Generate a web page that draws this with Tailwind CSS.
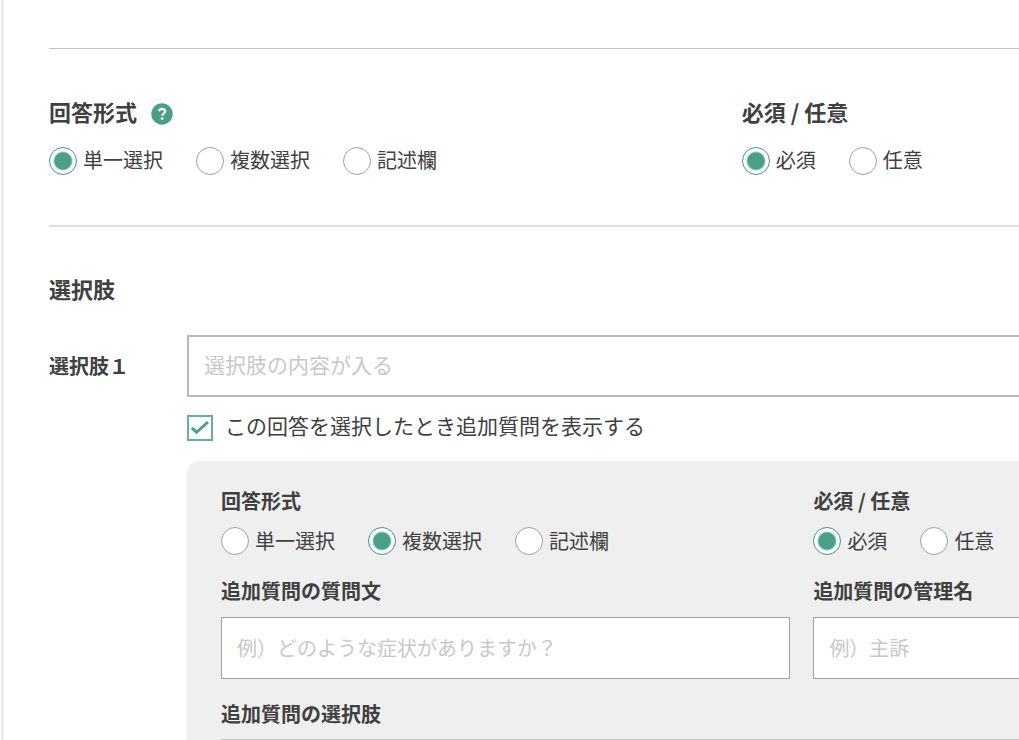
<!DOCTYPE html>
<html lang="ja">
<head>
<meta charset="utf-8">
<meta name="viewport" content="width=device-width, initial-scale=1">
<title>質問設定</title>
<script src="https://cdn.jsdelivr.net/npm/@tailwindcss/browser@4"></script>
</head>
<body class="h-screen overflow-hidden bg-white pl-px font-['Noto_Sans_CJK_JP',sans-serif] text-[#404040]">
<main class="h-full overflow-hidden border-l-[3px] border-[#ececec] pl-[45px]">
  <section class="mt-12 inline-block w-full border-t border-[#bfc7c5] pt-12">
    <div class="grid grid-cols-[5fr_2fr]">
      <fieldset>
        <legend class="flex items-end gap-[14px] text-[22px] leading-7 font-bold">回答形式
          <button type="button" aria-label="ヘルプ" class="block size-[22px]">
            <svg viewBox="0 0 22 22" class="size-full"><circle cx="11" cy="11" r="10.7" fill="#4b9f86"/><path d="M7.900 8.200C8.500 6.400 9.600 5.800 11 5.800c1.800 0 3.100 1 3.100 2.600 0 2.200-2.900 2.300-2.900 4.400" fill="none" stroke="#fff" stroke-width="2.200"/><circle cx="11.100" cy="15.600" r="1.400" fill="#fff"/></svg>
          </button>
        </legend>
        <div class="mt-[22px] flex gap-[33px] text-[20px] leading-[26px]">
          <label class="flex gap-1.5"><input type="radio" name="format" checked class="size-7 appearance-none rounded-full border border-[#a0a0a0] bg-white checked:border-[#3f997e] checked:bg-[radial-gradient(circle,#4b9f86_8px,#fff_10px)]">単一選択</label>
          <label class="flex gap-1.5"><input type="radio" name="format" class="size-7 appearance-none rounded-full border border-[#a0a0a0] bg-white checked:border-[#3f997e] checked:bg-[radial-gradient(circle,#4b9f86_8px,#fff_10px)]">複数選択</label>
          <label class="flex gap-1.5"><input type="radio" name="format" class="size-7 appearance-none rounded-full border border-[#a0a0a0] bg-white checked:border-[#3f997e] checked:bg-[radial-gradient(circle,#4b9f86_8px,#fff_10px)]">記述欄</label>
        </div>
      </fieldset>
      <fieldset>
        <legend class="text-[22px] leading-7 font-bold">必須 / 任意</legend>
        <div class="mt-[22px] flex gap-[33px] text-[20px] leading-[26px]">
          <label class="flex gap-1.5"><input type="radio" name="need" checked class="size-7 appearance-none rounded-full border border-[#a0a0a0] bg-white checked:border-[#3f997e] checked:bg-[radial-gradient(circle,#4b9f86_8px,#fff_10px)]">必須</label>
          <label class="flex gap-1.5"><input type="radio" name="need" class="size-7 appearance-none rounded-full border border-[#a0a0a0] bg-white checked:border-[#3f997e] checked:bg-[radial-gradient(circle,#4b9f86_8px,#fff_10px)]">任意</label>
        </div>
      </fieldset>
    </div>
    <div class="mt-[50px] border-t-2 border-[#d9dfdd] pt-12">
      <h2 class="text-[22px] leading-[26px] font-bold">選択肢</h2>
      <div class="mt-[34px] flex">
        <label for="choice1" class="w-[138px] shrink-0 text-[20px] leading-[62px] font-bold">選択肢１</label>
        <div class="min-w-0 flex-1">
          <input id="choice1" type="text" placeholder="選択肢の内容が入る" class="block h-[62px] w-full border-2 border-r-0 border-[#b8b8b8] bg-white px-[15px] pb-1 text-[21px] placeholder:text-[#c8c8c8]">
          <label class="mt-[18px] flex items-start gap-3 text-[21px] leading-5">
            <span class="grid size-[26px] shrink-0">
              <input type="checkbox" checked class="peer col-start-1 row-start-1 size-[26px] appearance-none border-2 border-[#66ae98] bg-white">
              <svg viewBox="0 0 26 26" class="pointer-events-none invisible col-start-1 row-start-1 peer-checked:visible"><path d="M4.800 12.800 9.500 17.300 21 7" fill="none" stroke="#4b9f86" stroke-width="3"/></svg>
            </span>
            この回答を選択したとき追加質問を表示する</label>
          <div class="mt-5 grid grid-cols-[36fr_13fr] gap-x-[23px] rounded-tl-xl bg-[#efefef] pt-[26px] pl-[34px]">
            <fieldset>
              <legend class="text-[20px] leading-7 font-bold">回答形式</legend>
              <div class="mt-3 flex gap-[33px] text-[20px] leading-7">
                <label class="flex gap-1.5"><input type="radio" name="subformat" class="size-7 appearance-none rounded-full border border-[#a0a0a0] bg-white checked:border-[#3f997e] checked:bg-[radial-gradient(circle,#4b9f86_8px,#fff_10px)]">単一選択</label>
                <label class="flex gap-1.5"><input type="radio" name="subformat" checked class="size-7 appearance-none rounded-full border border-[#a0a0a0] bg-white checked:border-[#3f997e] checked:bg-[radial-gradient(circle,#4b9f86_8px,#fff_10px)]">複数選択</label>
                <label class="flex gap-1.5"><input type="radio" name="subformat" class="size-7 appearance-none rounded-full border border-[#a0a0a0] bg-white checked:border-[#3f997e] checked:bg-[radial-gradient(circle,#4b9f86_8px,#fff_10px)]">記述欄</label>
              </div>
            </fieldset>
            <fieldset>
              <legend class="text-[20px] leading-7 font-bold">必須 / 任意</legend>
              <div class="mt-3 flex gap-[33px] text-[20px] leading-7">
                <label class="flex gap-1.5"><input type="radio" name="subneed" checked class="size-7 appearance-none rounded-full border border-[#a0a0a0] bg-white checked:border-[#3f997e] checked:bg-[radial-gradient(circle,#4b9f86_8px,#fff_10px)]">必須</label>
                <label class="flex gap-1.5"><input type="radio" name="subneed" class="size-7 appearance-none rounded-full border border-[#a0a0a0] bg-white checked:border-[#3f997e] checked:bg-[radial-gradient(circle,#4b9f86_8px,#fff_10px)]">任意</label>
              </div>
            </fieldset>
            <div class="mt-[22px]">
              <label for="q" class="block text-[20px] leading-7 font-bold">追加質問の質問文</label>
              <input id="q" type="text" placeholder="例）どのような症状がありますか？" class="mt-3 block h-[62px] w-full border border-[#a4a4a4] bg-white px-[15px] pb-0.5 text-[20px] placeholder:text-[#c8c8c8]">
            </div>
            <div class="mt-[22px]">
              <label for="n" class="block text-[20px] leading-7 font-bold">追加質問の管理名</label>
              <input id="n" type="text" placeholder="例）主訴" class="mt-3 block h-[62px] w-full border border-r-0 border-[#a4a4a4] bg-white px-[15px] pb-0.5 text-[20px] placeholder:text-[#c8c8c8]">
            </div>
            <div class="col-span-2 mt-[22px]">
              <label for="c" class="block text-[20px] leading-[26px] font-bold">追加質問の選択肢</label>
              <input id="c" type="text" class="mt-3 block h-[62px] w-full border border-r-0 border-[#c4c4c4] bg-white px-[15px] text-[20px]">
            </div>
          </div>
        </div>
      </div>
    </div>
  </section>
</main>
</body>
</html>
